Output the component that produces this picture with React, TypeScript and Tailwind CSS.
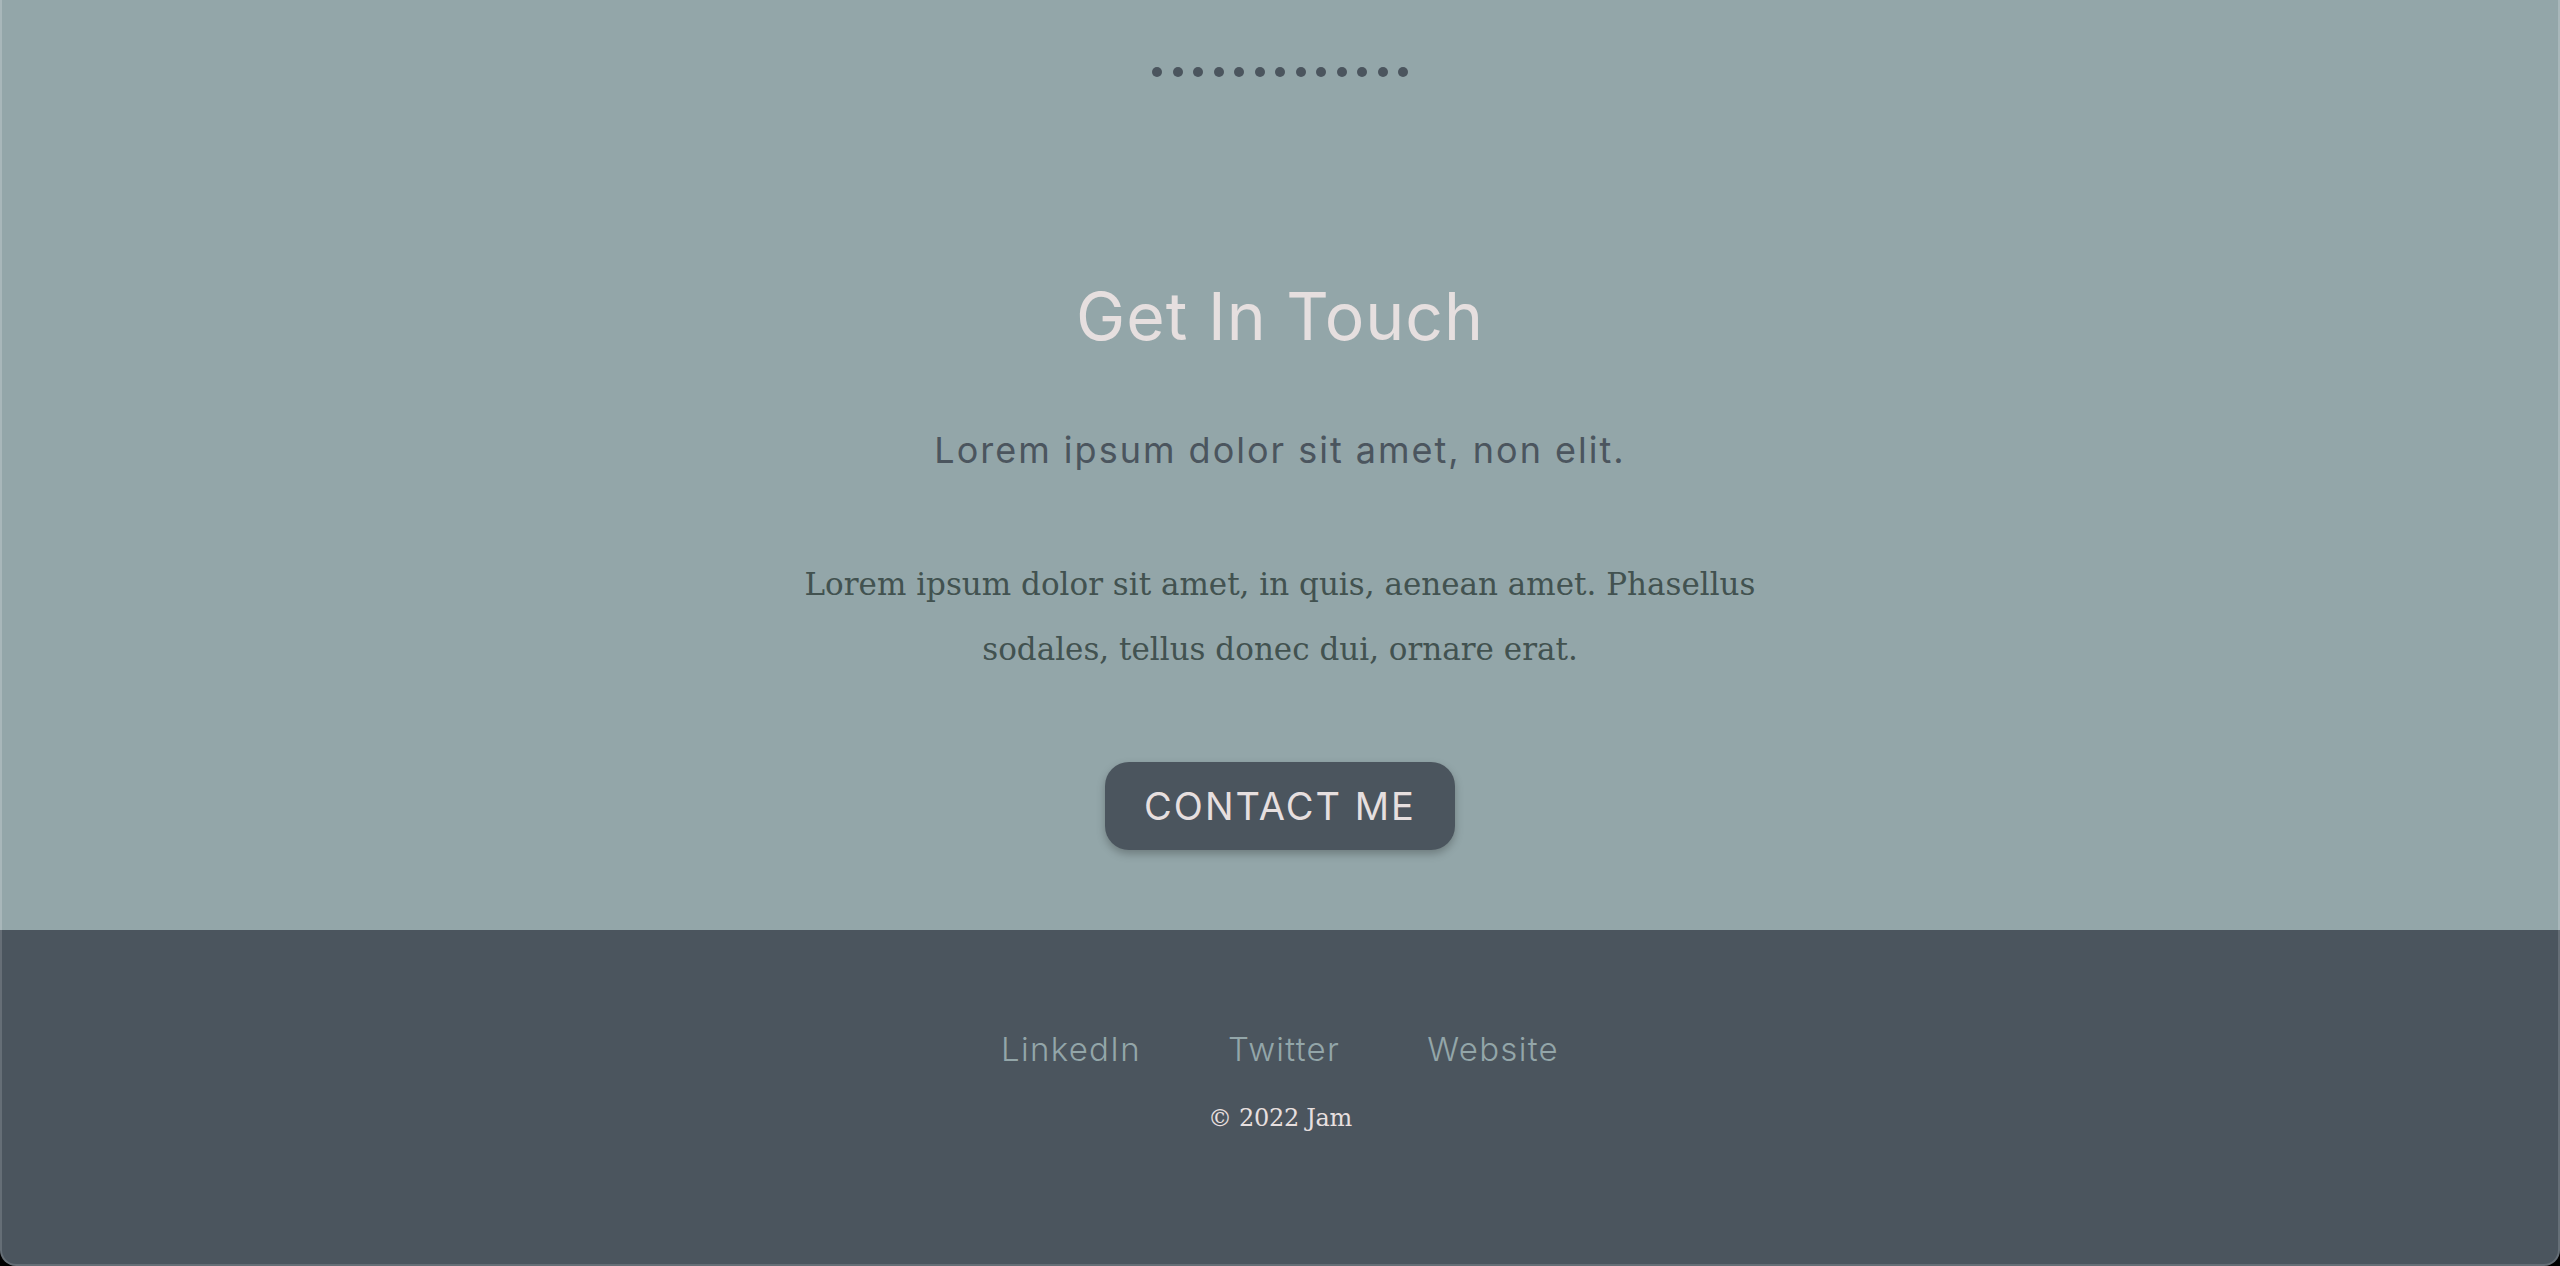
import React from "react";

const sans = "font-['Inter','Open_Sans',sans-serif]";
const serif = "font-['DejaVu_Serif','Liberation_Serif',serif]";

const Dots = () => (
  <div className="flex gap-[10.5px] pt-[67px]">
    {Array.from({ length: 13 }).map((_, i) => (
      <span key={i} className="h-[10px] w-[10px] rounded-full bg-[#4b555e]" />
    ))}
  </div>
);

const links = ["LinkedIn", "Twitter", "Website"];

export default function App() {
  return (
    <div className="flex h-[1266px] w-full flex-col bg-black">
      <section className="flex h-[930px] shrink-0 flex-col items-center border-x-2 border-white/20 bg-[#93a6a9]">
        <Dots />
        <h1 className={`${sans} mt-[206px] text-[66px] leading-none font-normal tracking-[1px] text-[#e6dfdf]`}>
          Get In Touch
        </h1>
        <p className={`${sans} mt-[83px] text-[36px] leading-none tracking-[2px] text-[#4b555e]`}>
          Lorem ipsum dolor sit amet, non elit.
        </p>
        <p className={`${serif} mt-[84px] max-w-[1000px] text-center text-[31px] leading-[65px] text-[#425250]`}>
          Lorem ipsum dolor sit amet, in quis, aenean amet. Phasellus sodales, tellus donec dui, ornare erat.
        </p>
        <button
          className={`${sans} mt-[80px] flex h-[88px] w-[350px] items-center justify-center rounded-[24px] bg-[#4b555e] text-[38px] tracking-[2px] text-[#e6dfdf] shadow-[0_4px_8px_rgba(0,0,0,0.25)]`}
        >
          CONTACT ME
        </button>
      </section>
      <footer className="flex flex-1 flex-col items-center rounded-b-[16px] border-x-2 border-b-2 border-white/15 bg-[#4b555e]">
        <nav className={`${sans} mt-[103px] flex gap-[87px] text-[33px] leading-none font-light tracking-[1.3px] text-[#93a6a9]`}>
          {links.map((l) => (
            <a key={l} href="#">
              {l}
            </a>
          ))}
        </nav>
        <p className={`${serif} mt-[40px] text-[24px] leading-none tracking-[-0.3px] text-[#e6dfdf]`}>© 2022 Jam</p>
      </footer>
    </div>
  );
}
